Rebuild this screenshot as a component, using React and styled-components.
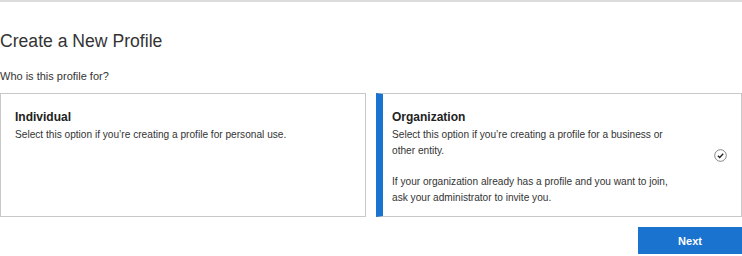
import React, { useState } from 'react'
import styled, { createGlobalStyle } from 'styled-components'

const GlobalStyle = createGlobalStyle`
  html, body {
    margin: 0;
    padding: 0;
    background: #fff;
    font-family: "Liberation Sans", Arial, sans-serif;
    color: #333;
  }
`

const Page = styled.div`
  width: 742px;
  height: 256px;
  border-top: 2px solid #dcdcdc;
  box-sizing: border-box;
  overflow: hidden;
`

const Title = styled.h1`
  margin: 27px 0 0;
  font-size: 17.6px;
  font-weight: 400;
  line-height: 24px;
  color: #333;
`

const Question = styled.p`
  margin: 16px 0 0;
  font-size: 11px;
  line-height: 14px;
  color: #333;
`

const Options = styled.div`
  display: grid;
  grid-template-columns: 366px 366px;
  column-gap: 10px;
  margin-top: 10px;
`

const Card = styled.div`
  display: flex;
  align-items: center;
  height: 124px;
  box-sizing: border-box;
  border: 1px solid #c8c8c8;
  border-left: ${p => (p.$selected ? '7px solid #1a73cf' : '1px solid #c8c8c8')};
  padding: 0 14px 0 ${p => (p.$selected ? '9px' : '14px')};
  cursor: pointer;
`

const CardBody = styled.div`
  flex: 1;
  align-self: flex-start;
  padding-top: 16px;
`

const CardTitle = styled.h2`
  margin: 0 0 2px;
  font-size: 12px;
  font-weight: 700;
  line-height: 15px;
  color: #222;
`

const CardText = styled.p`
  margin: 0 0 ${p => (p.$spaced ? '15px' : '0')};
  font-size: 10.15px;
  line-height: 16px;
  color: #333;
  max-width: 290px;
`

const Check = styled.svg`
  flex: none;
  width: 13px;
  height: 13px;
  margin-right: 0;
`

const Footer = styled.div`
  display: flex;
  justify-content: flex-end;
  margin-top: 10px;
`

const NextButton = styled.button`
  width: 104px;
  height: 27px;
  border: none;
  background: #1a73cf;
  color: #fff;
  font-family: "Liberation Sans", Arial, sans-serif;
  font-size: 11px;
  font-weight: 700;
  cursor: pointer;
`

function CheckIcon() {
  return (
    <Check viewBox="0 0 13 13">
      <circle cx="6.5" cy="6.5" r="5.8" fill="none" stroke="#777" strokeWidth="0.9" />
      <path d="M3.9 6.7 L5.7 8.4 L9.2 4.8" fill="none" stroke="#222" strokeWidth="1.4" />
    </Check>
  )
}

export default function App() {
  const [choice, setChoice] = useState('org')
  return (
    <Page>
      <GlobalStyle />
      <Title>Create a New Profile</Title>
      <Question>Who is this profile for?</Question>
      <Options>
        <Card $selected={choice === 'ind'} onClick={() => setChoice('ind')}>
          <CardBody>
            <CardTitle>Individual</CardTitle>
            <CardText>Select this option if you’re creating a profile for personal use.</CardText>
          </CardBody>
          {choice === 'ind' && <CheckIcon />}
        </Card>
        <Card $selected={choice === 'org'} onClick={() => setChoice('org')}>
          <CardBody>
            <CardTitle>Organization</CardTitle>
            <CardText $spaced>
              Select this option if you’re creating a profile for a business or other entity.
            </CardText>
            <CardText>
              If your organization already has a profile and you want to join, ask your administrator to invite you.
            </CardText>
          </CardBody>
          {choice === 'org' && <CheckIcon />}
        </Card>
      </Options>
      <Footer>
        <NextButton>Next</NextButton>
      </Footer>
    </Page>
  )
}
